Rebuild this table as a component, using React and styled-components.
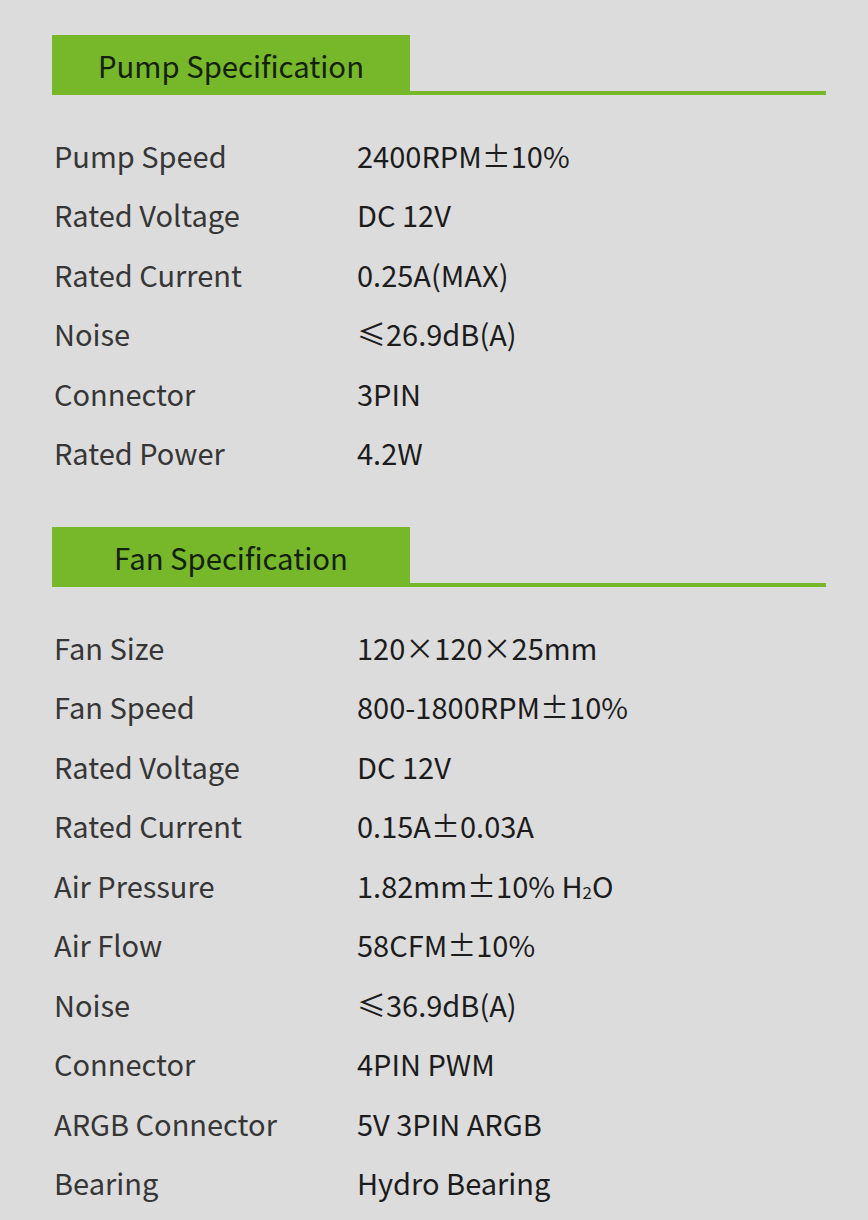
import React from 'react';
import styled, { createGlobalStyle } from 'styled-components';

const GlobalStyle = createGlobalStyle`
  html, body {
    margin: 0;
    padding: 0;
    background: #dcdcdc;
  }
  body {
    font-family: "Noto Sans CJK SC", "Noto Sans", sans-serif;
  }
`;

const Page = styled.div`
  width: 774px;
  padding: 35px 0 20px 52px;
`;

const Section = styled.section`
  margin-bottom: ${props => props.gap || 0}px;
`;

const Header = styled.div`
  display: flex;
  align-items: flex-end;
  height: 60px;
`;

const Tab = styled.div`
  width: 358px;
  height: 60px;
  background: #76b82a;
  color: #15200c;
  font-size: 29.3px;
  display: flex;
  align-items: center;
  justify-content: center;
`;

const Rule = styled.div`
  flex: 1;
  height: 4px;
  background: #76b82a;
`;

const Table = styled.div`
  padding-top: 30px;
`;

const Row = styled.div`
  display: grid;
  grid-template-columns: 303px 1fr;
  height: 59.5px;
  align-items: center;
  font-size: 29px;
  padding-left: 2px;
`;

const Label = styled.span`
  color: #363636;
`;

const Value = styled.span`
  color: #1c1c1c;
`;

const Sub = styled.span`
  font-size: 17px;
  vertical-align: -1px;
`;

const pump = [
  ['Pump Speed', '2400RPM±10%'],
  ['Rated Voltage', 'DC 12V'],
  ['Rated Current', '0.25A(MAX)'],
  ['Noise', '≤26.9dB(A)'],
  ['Connector', '3PIN'],
  ['Rated Power', '4.2W']
];

const fan = [
  ['Fan Size', '120×120×25mm'],
  ['Fan Speed', '800-1800RPM±10%'],
  ['Rated Voltage', 'DC 12V'],
  ['Rated Current', '0.15A±0.03A'],
  ['Air Pressure', <>1.82mm±10% H<Sub>2</Sub>O</>],
  ['Air Flow', '58CFM±10%'],
  ['Noise', '≤36.9dB(A)'],
  ['Connector', '4PIN PWM'],
  ['ARGB Connector', '5V 3PIN ARGB'],
  ['Bearing', 'Hydro Bearing']
];

const Spec = ({ title, rows, gap }) => (
  <Section gap={gap}>
    <Header>
      <Tab>{title}</Tab>
      <Rule />
    </Header>
    <Table>
      {rows.map(([label, value], i) => (
        <Row key={i}>
          <Label>{label}</Label>
          <Value>{value}</Value>
        </Row>
      ))}
    </Table>
  </Section>
);

export default function App() {
  return (
    <Page>
      <GlobalStyle />
      <Spec title="Pump Specification" rows={pump} gap={45} />
      <Spec title="Fan Specification" rows={fan} />
    </Page>
  );
}
